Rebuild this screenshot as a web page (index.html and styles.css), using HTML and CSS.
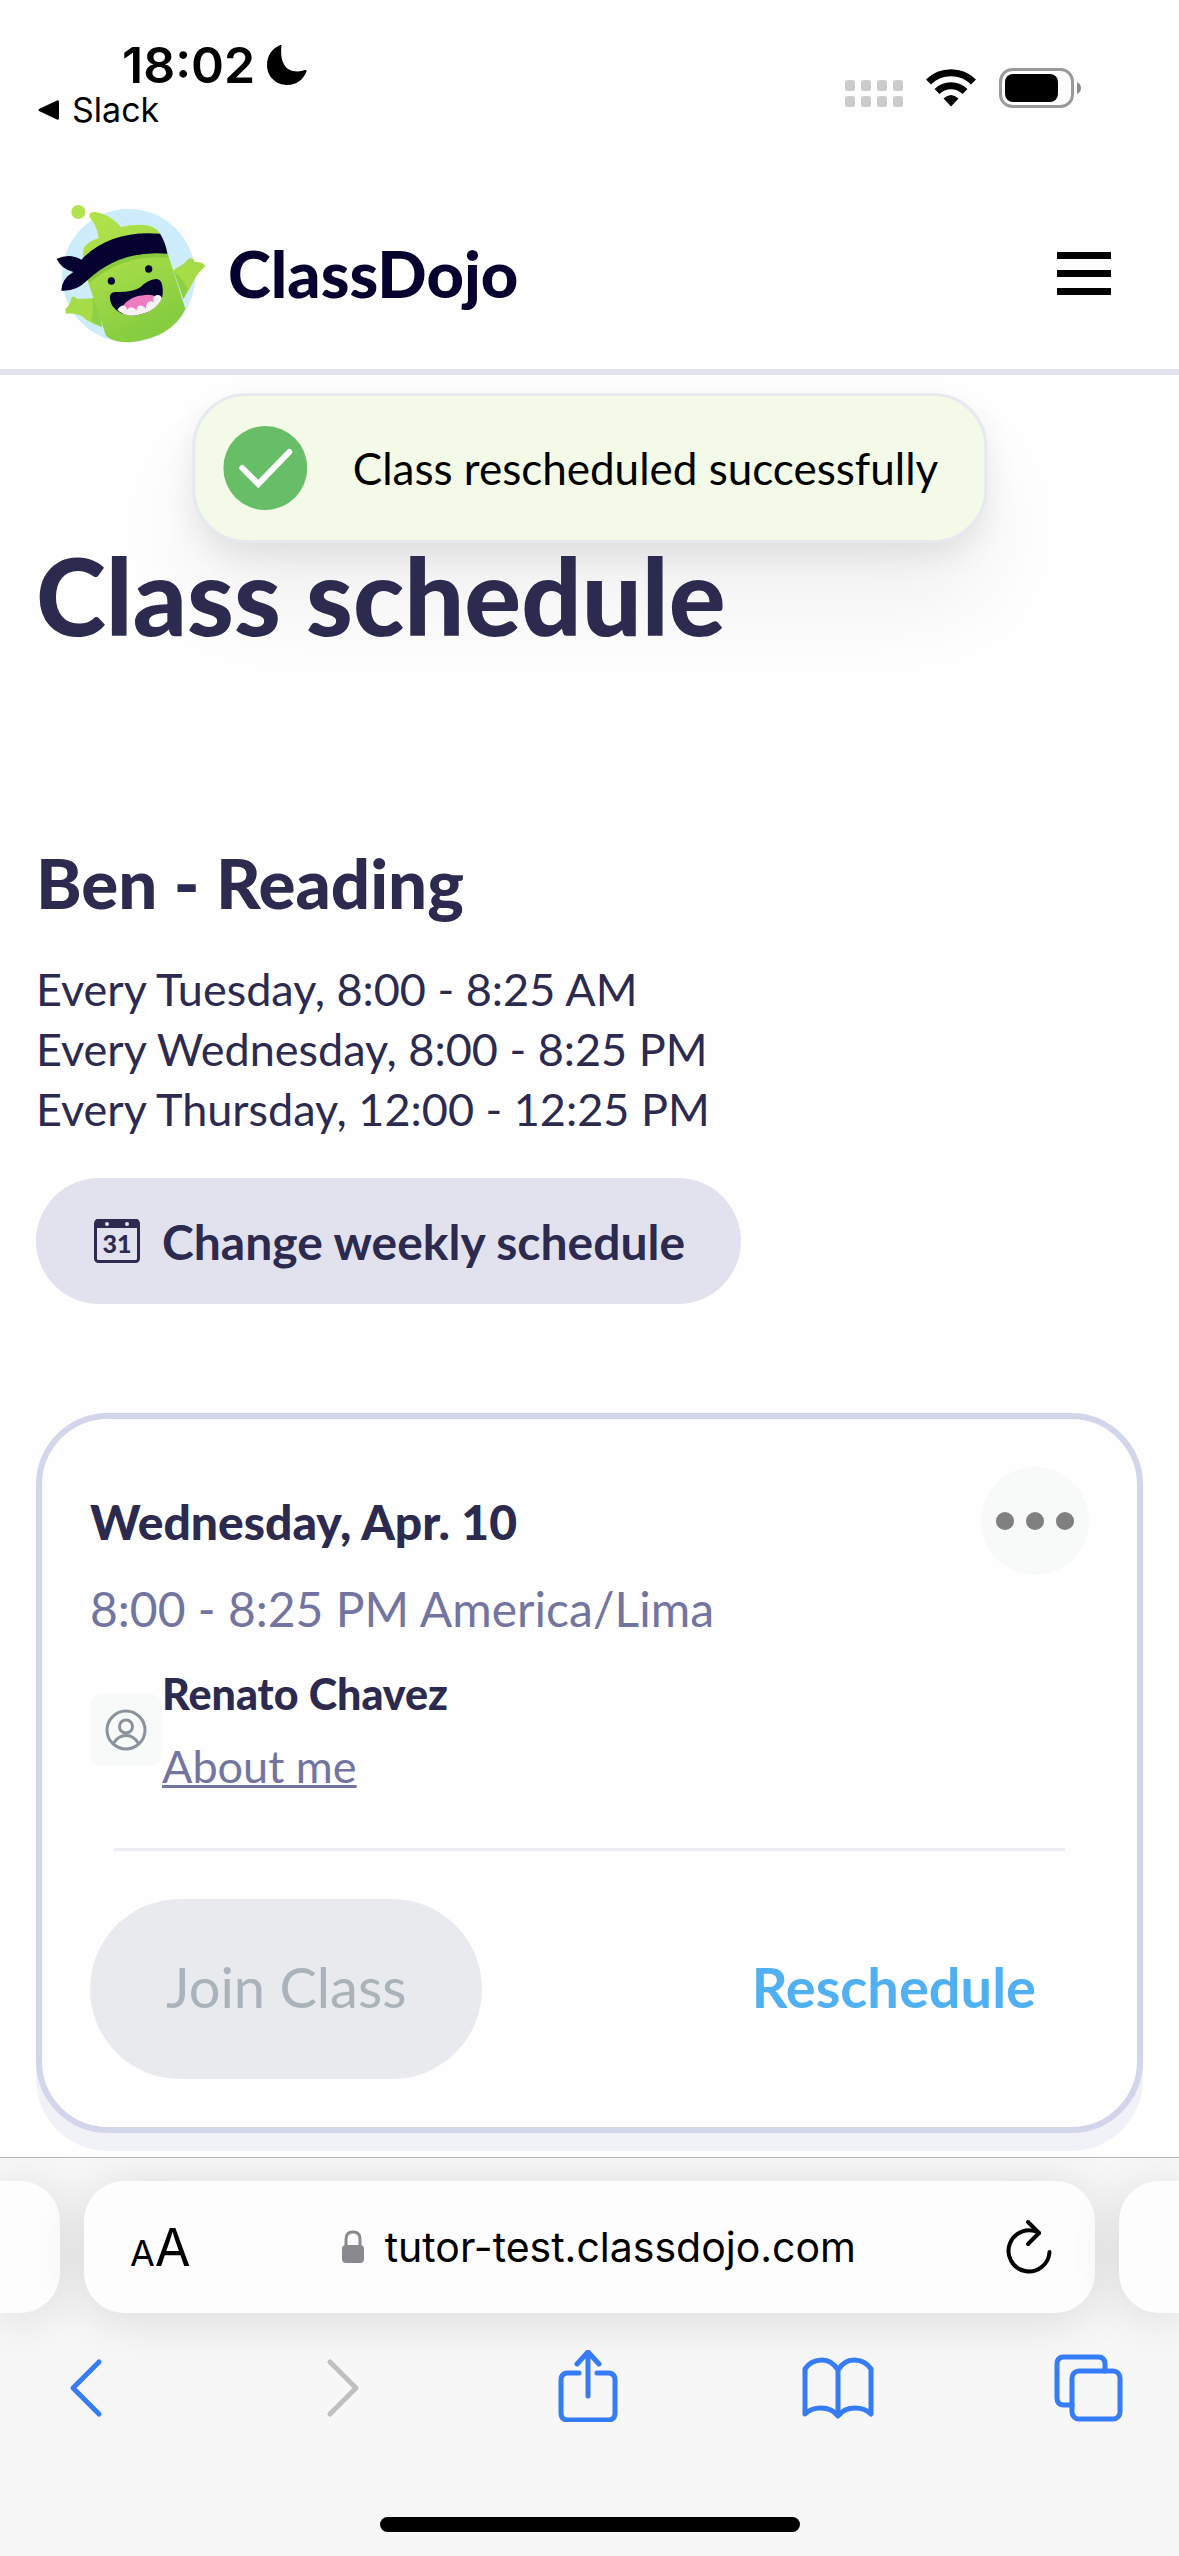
FILE: index.html
```html
<!DOCTYPE html>
<html lang="en">
<head>
    <meta charset="UTF-8">
    <meta name="viewport" content="width=device-width, initial-scale=1.0">
    <title>Class schedule - ClassDojo</title>
    <link rel="stylesheet" href="styles.css">
</head>
<body>
    <!-- Phone status bar -->
    <div class="status-bar">
        <div class="status-left">
            <div class="status-time">
                <span>18:02</span>
                <svg width="40" height="40" viewBox="0 0 40 40" aria-hidden="true">
                    <path d="M14.500 0.500C12.800 13 16.500 21.500 22 24.500C27 27.200 33.500 26.800 38 25C39.200 24.600 39.900 25.500 39.400 26.700C36.500 34.500 29 40 20.500 40C9 40 0 31.500 0 20C0 11 5 3.500 12.800 0.300C13.800 -0.100 14.600 -0.200 14.500 0.500Z"/>
                </svg>
            </div>
            <a class="status-back" href="#">
                <svg width="22" height="22" viewBox="0 0 22 22" aria-hidden="true">
                    <path d="M19 1.500Q21 0.500 21 3V19Q21 21.500 19 20.500L1.500 12.300Q-0.500 11 1.500 9.700Z"/>
                </svg>
                <span>Slack</span>
            </a>
        </div>
        <div class="status-right">
            <svg width="58" height="28" viewBox="0 0 58 28" fill="#cbcbcb" aria-hidden="true">
                <rect x="0" y="0" width="10" height="11" rx="3"/>
                <rect x="16" y="0" width="10" height="11" rx="3"/>
                <rect x="32" y="0" width="10" height="11" rx="3"/>
                <rect x="48" y="0" width="10" height="11" rx="3"/>
                <rect x="0" y="16" width="10" height="11" rx="3"/>
                <rect x="16" y="16" width="10" height="11" rx="3"/>
                <rect x="32" y="16" width="10" height="11" rx="3"/>
                <rect x="48" y="16" width="10" height="11" rx="3"/>
            </svg>
            <svg width="52" height="39" viewBox="0 0 52 39" aria-hidden="true">
                <path d="M3.500 13A32 32 0 0 1 48.500 13" fill="none" stroke="#000" stroke-width="7"/>
                <path d="M12 22.500A20 20 0 0 1 40 22.500" fill="none" stroke="#000" stroke-width="7"/>
                <path d="M26 37.500L18.500 29.500Q26 22.500 33.500 29.500Z"/>
            </svg>
            <svg width="83" height="40" viewBox="0 0 83 40" aria-hidden="true">
                <rect x="1.500" y="1.500" width="72" height="37" rx="12" fill="none" stroke="#9a9a9a" stroke-width="3"/>
                <rect x="6" y="6" width="53" height="28" rx="8"/>
                <path d="M78 14Q82 16 82 20Q82 24 78 26Z" fill="#8b8b8b"/>
            </svg>
        </div>
    </div>

    <!-- Site header -->
    <header class="site-header">
        <a class="brand" href="#">
            <svg class="brand-logo" viewBox="72 60 468 432" aria-hidden="true">
                <defs>
                    <linearGradient id="body-green" x1="0" y1="0" x2="0.400" y2="1">
                        <stop offset="0" stop-color="#b2e34b"/>
                        <stop offset="0.450" stop-color="#a6dc48"/>
                        <stop offset="1" stop-color="#86cd40"/>
                    </linearGradient>
                </defs>
                <circle cx="296" cy="284" r="200" fill="#cdecfc"/>
                <circle cx="145" cy="93" r="21" fill="#b2e34b"/>
                <!-- arms -->
                <path d="M430 268L464 246Q478 226 490 234L494 243Q520 242 526 256Q500 280 493 296Q476 330 460 354Z" fill="#a6dc48"/>
                <path d="M432 270Q462 300 474 324L460 354Z" fill="#8ed043"/>
                <path d="M196 352L142 354Q128 340 124 352Q122 372 106 384L108 398Q150 394 168 416Q190 430 216 438Z" fill="#a6dc48"/>
                <path d="M186 352Q192 385 184 420L216 438L200 352Z" fill="#8ed043"/>
                <!-- body -->
                <path d="M206 172Q202 134 180 110Q172 92 196 93Q236 98 274 138Q368 118 392 160Q408 190 414 220L466 384Q426 470 300 484Q248 484 228 464L172 296Q150 210 166 194Q186 176 206 172Z" fill="url(#body-green)"/>
                <path d="M174 292Q270 206 412 218L415 230Q280 218 178 306Z" fill="#8acb3e"/>
                <!-- headband -->
                <path d="M154 236Q240 146 390 158Q406 182 412 218Q270 206 172 298Q140 332 94 329Q94 294 130 273Q92 262 80 233Q120 216 154 236Z" fill="#050230"/>
                <circle cx="244" cy="300" r="11" fill="#050230"/>
                <circle cx="356" cy="264" r="11" fill="#050230"/>
                <!-- mouth -->
                <path d="M240 344Q242 334 258 333Q310 334 332 318Q354 296 378 294Q388 294 394 304Q402 328 396 350Q378 394 312 404Q266 404 248 376Q238 358 240 344Z" fill="#050230"/>
                <path d="M276 378Q298 344 346 342Q368 340 376 348L380 366Q340 398 292 392Z" fill="#ef7cc0"/>
                <path d="M262 386Q278 366 288 378Q292 384 290 388Q302 370 320 388Q320 372 334 374Q346 376 348 384Q348 362 362 361Q374 362 374 370Q364 346 380 342Q392 340 396 352Q376 396 312 404Q278 404 262 386Z" fill="#f6f2f4"/>
            </svg>
            <span class="brand-name">ClassDojo</span>
        </a>
        <button class="menu-button" type="button" aria-label="Menu">
            <span></span>
            <span></span>
            <span></span>
        </button>
    </header>

    <main class="page">
        <div class="toast" role="status">
            <svg width="84" height="84" viewBox="0 0 84 84" aria-hidden="true">
                <circle cx="42" cy="42" r="42" fill="#68be66"/>
                <path d="M19 42L35 58L66 26" fill="none" stroke="#fff" stroke-width="6" stroke-linecap="round"/>
            </svg>
            <span>Class rescheduled successfully</span>
        </div>

        <h1>Class schedule</h1>

        <section class="student">
            <h2>Ben - Reading</h2>
            <ul class="weekly-times">
                <li>Every Tuesday, 8:00 - 8:25 AM</li>
                <li>Every Wednesday, 8:00 - 8:25 PM</li>
                <li>Every Thursday, 12:00 - 12:25 PM</li>
            </ul>
            <button class="change-button" type="button">
                <svg width="46" height="46" viewBox="0 0 46 46" aria-hidden="true">
                    <rect x="1.500" y="2.500" width="43" height="41" rx="3" fill="none" stroke="#2c2a4f" stroke-width="3"/>
                    <path d="M1 10V4Q1 1 4 1H42Q45 1 45 4V10Z" fill="#2c2a4f"/>
                    <circle cx="13" cy="6" r="2" fill="#e2e2ee"/>
                    <circle cx="33" cy="6" r="2" fill="#e2e2ee"/>
                    <text class="calendar-day" x="23" y="35" text-anchor="middle">31</text>
                </svg>
                <span>Change weekly schedule</span>
            </button>
        </section>

        <article class="class-card">
            <div class="card-top">
                <h3>Wednesday, Apr. 10</h3>
                <button class="more-button" type="button" aria-label="More options">
                    <svg width="78" height="18" viewBox="0 0 78 18" fill="#808080" aria-hidden="true">
                        <circle cx="9" cy="9" r="9"/>
                        <circle cx="39" cy="9" r="9"/>
                        <circle cx="69" cy="9" r="9"/>
                    </svg>
                </button>
            </div>
            <p class="class-time">8:00 - 8:25 PM America/Lima</p>
            <div class="tutor">
                <div class="avatar">
                    <svg width="42" height="42" viewBox="0 0 42 42" fill="none" stroke="#8a939b" stroke-width="3" aria-hidden="true">
                        <circle cx="21" cy="21" r="19"/>
                        <circle cx="21" cy="17.500" r="6.500"/>
                        <path d="M8.500 34.500Q13 26.500 21 26.500Q29 26.500 33.500 34.500"/>
                    </svg>
                </div>
                <div class="tutor-info">
                    <span class="tutor-name">Renato Chavez</span>
                    <a href="#">About me</a>
                </div>
            </div>
            <hr>
            <div class="card-actions">
                <button class="join-button" type="button" disabled>Join Class</button>
                <button class="reschedule-button" type="button">Reschedule</button>
            </div>
        </article>
    </main>

    <!-- Browser toolbar -->
    <footer class="browser-bar">
        <div class="tab-row">
            <div class="tab-edge tab-edge-left"></div>
            <div class="address-bar">
                <button class="text-size" type="button" aria-label="Page settings"><small>A</small>A</button>
                <button class="address" type="button">
                    <svg width="24" height="34" viewBox="0 0 24 34" aria-hidden="true">
                        <path d="M5 16V9Q5 2 12 2Q19 2 19 9V16" fill="none" stroke="#8a898e" stroke-width="3"/>
                        <rect x="1" y="15" width="22" height="18" rx="4" fill="#8a898e"/>
                    </svg>
                    <span>tutor-test.classdojo.com</span>
                </button>
                <button class="reload" type="button" aria-label="Reload">
                    <svg width="46" height="56" viewBox="0 0 46 56" fill="none" stroke="#000" stroke-width="4" stroke-linecap="round" stroke-linejoin="round" aria-hidden="true">
                        <path d="M43.500 33A20.500 20.500 0 1 1 33 14"/>
                        <path d="M22 3L33 14L22 25"/>
                    </svg>
                </button>
            </div>
            <div class="tab-edge tab-edge-right"></div>
        </div>
        <nav class="browser-nav">
            <button type="button" aria-label="Back">
                <svg width="72" height="72" viewBox="0 0 72 72">
                    <path d="M49 12L23 38L49 64"/>
                </svg>
            </button>
            <button type="button" aria-label="Forward" disabled>
                <svg width="72" height="72" viewBox="0 0 72 72">
                    <path d="M29 12L55 38L29 64"/>
                </svg>
            </button>
            <button type="button" aria-label="Share">
                <svg width="72" height="72" viewBox="0 0 72 72">
                    <path d="M28 23H17Q10 23 10 30V63Q10 70 17 70H57Q64 70 64 63V30Q64 23 57 23H46"/>
                    <path d="M37 46V3M26 14L37 2L48 14"/>
                </svg>
            </button>
            <button type="button" aria-label="Bookmarks">
                <svg width="72" height="72" viewBox="0 0 72 72">
                    <path d="M36 20Q30 10 20 10Q9 10 3 19V64Q9 58 19 58Q30 58 36 66Q42 58 53 58Q63 58 69 64V19Q63 10 52 10Q42 10 36 20ZM36 20V64"/>
                </svg>
            </button>
            <button type="button" aria-label="Tabs">
                <svg width="72" height="72" viewBox="0 0 72 72">
                    <rect x="20" y="21" width="48" height="48" rx="7"/>
                    <path d="M20 55H12Q5 55 5 48V14Q5 7 12 7H46Q53 7 53 14V21"/>
                </svg>
            </button>
        </nav>
        <div class="home-indicator"></div>
    </footer>
</body>
</html>
```
FILE: styles.css
```css
/* General Reset */
* {
    margin: 0;
    padding: 0;
    box-sizing: border-box;
}

body {
    font-family: Lato, 'Liberation Sans', sans-serif;
    background-color: #fefefe;
    color: #2c2a4f;
    display: flex;
    flex-direction: column;
    min-height: 100vh;
}

button {
    font-family: inherit;
    color: inherit;
    background: none;
    border: none;
    cursor: pointer;
}

a {
    color: inherit;
    text-decoration: none;
}

svg {
    display: block;
    flex-shrink: 0;
}

/* Status Bar */
.status-bar {
    display: flex;
    justify-content: space-between;
    align-items: flex-start;
    height: 177px;
    padding: 38px 97px 0 38px;
    font-family: Inter, 'Liberation Sans', sans-serif;
    color: #000;
}

.status-time {
    display: flex;
    align-items: center;
    gap: 12px;
    padding-left: 84px;
    font-size: 50px;
    font-weight: 600;
    line-height: 54px;
}

.status-back {
    display: flex;
    align-items: center;
    gap: 12px;
    font-size: 34px;
    line-height: 36px;
}

.status-right {
    display: flex;
    align-items: flex-end;
    gap: 22px;
    padding-top: 30px;
}

/* Site Header */
.site-header {
    display: flex;
    justify-content: space-between;
    align-items: center;
    height: 198px;
    padding: 0 56px 0 54px;
    border-bottom: 6px solid #e2e2ee;
}

.brand {
    display: flex;
    align-items: center;
    gap: 18px;
}

.brand-logo {
    width: 156px;
    height: 144px;
}

.brand-name {
    font-size: 65px;
    font-weight: 900;
    color: #050230;
}

.menu-button {
    display: flex;
    flex-direction: column;
    gap: 11px;
    padding: 12px;
}

.menu-button span {
    width: 54px;
    height: 7px;
    background-color: #000;
}

/* Page Content */
.page {
    position: relative;
    flex: 1;
    padding: 160px 36px 24px;
}

h1 {
    font-size: 106px;
    font-weight: 900;
    line-height: 120px;
}

h2 {
    font-size: 69px;
    font-weight: 900;
    line-height: 80px;
}

/* Toast Message */
.toast {
    position: absolute;
    top: 18px;
    left: 50%;
    transform: translateX(-50%);
    display: flex;
    align-items: center;
    gap: 46px;
    height: 150px;
    padding: 0 46px 0 28px;
    border: 3px solid #e8e9ee;
    border-radius: 54px;
    background-color: #f3fae7;
    box-shadow: 0 60px 90px rgba(0, 0, 0, 0.06), 0 12px 30px rgba(0, 0, 0, 0.08);
    color: #000;
    font-size: 44px;
    white-space: nowrap;
    z-index: -1;
}

/* Student Schedule */
.student {
    margin-top: 188px;
}

.weekly-times {
    list-style: none;
    margin-top: 36px;
    font-size: 45px;
    line-height: 60px;
}

.change-button {
    display: flex;
    align-items: center;
    gap: 22px;
    height: 126px;
    margin-top: 39px;
    padding: 0 56px 0 58px;
    border-radius: 63px;
    background-color: #e2e2ee;
    font-size: 48px;
    font-weight: 700;
}

.calendar-day {
    font-size: 25px;
    font-weight: 900;
    fill: #2c2a4f;
}

/* Class Card */
.class-card {
    margin-top: 109px;
    padding: 48px;
    border: 6px solid #d3d5ea;
    border-radius: 72px;
    background-color: #fefefe;
    box-shadow: 0 18px 0 #f1f2f8;
}

.card-top {
    display: flex;
    justify-content: space-between;
    align-items: center;
}

h3 {
    font-size: 48px;
    font-weight: 900;
}

.more-button {
    display: flex;
    justify-content: center;
    align-items: center;
    width: 108px;
    height: 108px;
    border-radius: 50%;
    background-color: #f8faf9;
}

.class-time {
    margin-top: 4px;
    font-size: 48px;
    line-height: 60px;
    color: #7375a0;
}

.tutor {
    display: flex;
    align-items: center;
    margin-top: 19px;
}

.avatar {
    display: flex;
    justify-content: center;
    align-items: center;
    width: 72px;
    height: 72px;
    border-radius: 12px;
    background-color: #f8faf9;
}

.tutor-info {
    display: flex;
    flex-direction: column;
    align-items: flex-start;
    line-height: 72px;
}

.tutor-name {
    font-size: 43px;
    font-weight: 900;
}

.tutor-info a {
    font-size: 45px;
    color: #7375a0;
    text-decoration: underline;
    text-decoration-thickness: 3px;
}

hr {
    height: 3px;
    margin: 46px 24px 48px;
    border: none;
    background-color: #ececf4;
}

.card-actions {
    display: flex;
    justify-content: space-between;
    align-items: center;
}

.join-button,
.reschedule-button {
    height: 180px;
    padding-bottom: 6px;
    border-radius: 90px;
    font-size: 56px;
}

.join-button {
    padding-left: 76px;
    padding-right: 76px;
    background-color: #e8eaed;
    color: #abb3ba;
    cursor: default;
}

.reschedule-button {
    padding-right: 53px;
    color: #50b0f2;
    font-weight: 700;
}

/* Browser Toolbar */
.browser-bar {
    position: sticky;
    bottom: 0;
    padding: 23px 0 24px;
    border-top: 1px solid #b6b6b6;
    background-color: #f7f7f7;
    font-family: Inter, 'Liberation Sans', sans-serif;
    color: #000;
    overflow: hidden;
}

.tab-row {
    display: flex;
    gap: 24px;
    height: 132px;
}

.tab-edge,
.address-bar {
    background-color: #fdfdfd;
    box-shadow: 0 6px 50px rgba(0, 0, 0, 0.12);
}

.tab-edge {
    width: 60px;
}

.tab-edge-left {
    border-radius: 0 40px 40px 0;
}

.tab-edge-right {
    border-radius: 40px 0 0 40px;
}

.address-bar {
    flex: 1;
    display: flex;
    justify-content: space-between;
    align-items: center;
    padding: 0 43px 0 46px;
    border-radius: 40px;
}

.text-size {
    font-size: 52px;
}

.text-size small {
    font-size: 36px;
}

.address {
    display: flex;
    align-items: center;
    gap: 20px;
    font-size: 41px;
}

.browser-nav {
    display: flex;
    justify-content: space-between;
    margin-top: 37px;
    padding: 0 55px 0 50px;
}

.browser-nav svg {
    fill: none;
    stroke: #367cf7;
    stroke-width: 5;
    stroke-linecap: round;
    stroke-linejoin: round;
}

.browser-nav button:disabled svg {
    stroke: #bfbfbf;
}

.home-indicator {
    width: 420px;
    height: 15px;
    margin: 95px auto 0;
    border-radius: 8px;
    background-color: #000;
}
```
